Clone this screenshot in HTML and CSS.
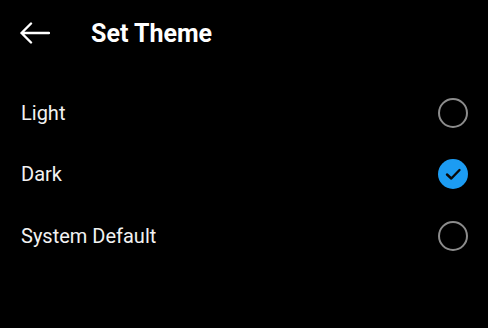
FILE: index.html
```html
<!DOCTYPE html>
<html lang="en">
<head>
  <meta charset="UTF-8">
  <title>Set Theme</title>
  <link rel="stylesheet" href="styles.css">
</head>
<body>
  <header class="topbar">
    <button class="back" aria-label="Back">
      <svg width="30" height="22" viewBox="0 0 30 22">
        <path d="M1.5 11 H29 M11 1.5 L1.5 11 L11 20.5" fill="none" stroke="#fff" stroke-width="2.4" stroke-linecap="round" stroke-linejoin="round"/>
      </svg>
    </button>
    <h1>Set Theme</h1>
  </header>

  <ul class="options">
    <li class="option">
      <span>Light</span>
      <span class="radio"></span>
    </li>
    <li class="option">
      <span>Dark</span>
      <span class="radio checked">
        <svg width="30" height="30" viewBox="0 0 30 30">
          <path d="M9 15.5 L13.3 19.5 L21.5 11" fill="none" stroke="#0a0a0a" stroke-width="2.4" stroke-linecap="round" stroke-linejoin="round"/>
        </svg>
      </span>
    </li>
    <li class="option">
      <span>System Default</span>
      <span class="radio"></span>
    </li>
  </ul>
</body>
</html>
```

FILE: styles.css
```css
body {
  margin: 0;
  background-color: #000;
  color: #f2f2f2;
  font-family: Roboto, "Liberation Sans", sans-serif;
}
.topbar {
  display: flex;
  align-items: center;
  height: 66px;
  padding: 0 20px;
}
.back {
  display: flex;
  background: none;
  border: none;
  padding: 0;
  margin-right: 41px;
  cursor: pointer;
}
.topbar h1 {
  margin: 0;
  font-size: 25px;
  font-weight: 700;
  color: #fff;
}
.options {
  list-style: none;
  margin: 0;
  padding: 16px 20px 0 21px;
}
.option {
  display: flex;
  align-items: center;
  justify-content: space-between;
  height: 61.5px;
  font-size: 20px;
}
.radio {
  box-sizing: border-box;
  width: 30px;
  height: 30px;
  border: 2.5px solid #8c8c8c;
  border-radius: 50%;
}
.radio.checked {
  border: none;
  background-color: #1c9cf3;
}
.radio svg {
  display: block;
}
```
